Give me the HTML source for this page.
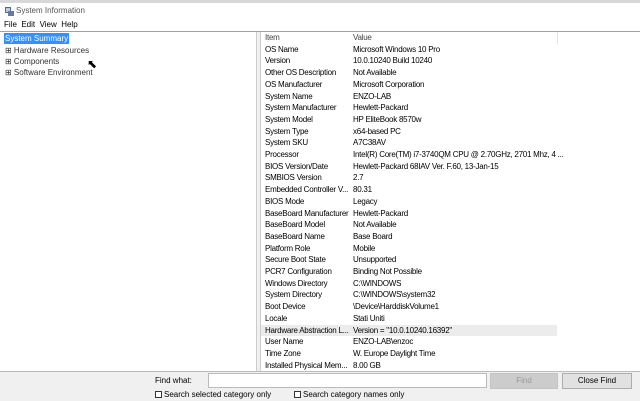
<!DOCTYPE html><html><head><style>
*{margin:0;padding:0;box-sizing:border-box}
body{width:640px;height:401px;background:#f0f0f0;font-family:"Liberation Sans",sans-serif;font-size:8px;color:#000;position:relative;overflow:hidden}
.a{position:absolute;white-space:nowrap}
.r{position:absolute;left:0;width:380px;height:11.7px;line-height:11.7px;letter-spacing:-0.25px}
.r span{position:absolute}
.r .k{left:4px}.r .v{left:92px}
</style></head><body>
<div class="a" style="left:0;top:0;width:640px;height:3px;background:#d8d8d8"></div>
<div class="a" style="left:0;top:3px;width:640px;height:28px;background:#fff"></div>
<svg class="a" style="left:5px;top:7px" width="9" height="9"><rect x="0" y="0" width="6" height="6" fill="#4a6aa8"/><rect x="1" y="1" width="4" height="4" fill="#bcd"/><rect x="3" y="4" width="6" height="5" fill="#6a7a9a"/></svg>
<div class="a" style="left:16px;top:6px;color:#555">System Information</div>
<div class="a" style="left:4px;top:20px">File&nbsp;&nbsp;Edit&nbsp;&nbsp;View&nbsp;&nbsp;Help</div>
<div class="a" style="left:0;top:31px;width:640px;height:1px;background:#a0a0a0"></div>
<div class="a" style="left:0;top:32px;width:257px;height:340px;background:#fff;border-right:1px solid #ccc"></div>
<div class="a" style="left:4px;top:33px;height:11px;line-height:11px;background:#3390ff;color:#fff;padding:0 1px">System Summary</div>
<div class="a" style="left:5px;top:45px;line-height:11px;color:#333">⊞ Hardware Resources</div>
<div class="a" style="left:5px;top:56px;line-height:11px;color:#333">⊞ Components</div>
<div class="a" style="left:5px;top:67px;line-height:11px;color:#333">⊞ Software Environment</div>
<div class="a" style="left:87px;top:57px;font-size:12px">⬉</div>
<div class="a" style="left:260px;top:32px;width:380px;height:340px;background:#fff;border-left:1px solid #ccc;overflow:hidden">
<div class="a" style="left:296px;top:0;width:1px;height:12px;background:#e5e5e5"></div>
<div class="r" style="top:0px;color:#444"><span class="k">Item</span><span class="v">Value</span></div>
<div class="r" style="top:11.7px"><span class="k">OS Name</span><span class="v">Microsoft Windows 10 Pro</span></div>
<div class="r" style="top:23.4px"><span class="k">Version</span><span class="v">10.0.10240 Build 10240</span></div>
<div class="r" style="top:35.1px"><span class="k">Other OS Description</span><span class="v">Not Available</span></div>
<div class="r" style="top:46.8px"><span class="k">OS Manufacturer</span><span class="v">Microsoft Corporation</span></div>
<div class="r" style="top:58.5px"><span class="k">System Name</span><span class="v">ENZO-LAB</span></div>
<div class="r" style="top:70.2px"><span class="k">System Manufacturer</span><span class="v">Hewlett-Packard</span></div>
<div class="r" style="top:81.9px"><span class="k">System Model</span><span class="v">HP EliteBook 8570w</span></div>
<div class="r" style="top:93.6px"><span class="k">System Type</span><span class="v">x64-based PC</span></div>
<div class="r" style="top:105.3px"><span class="k">System SKU</span><span class="v">A7C38AV</span></div>
<div class="r" style="top:117px"><span class="k">Processor</span><span class="v">Intel(R) Core(TM) i7-3740QM CPU @ 2.70GHz, 2701 Mhz, 4 ...</span></div>
<div class="r" style="top:128.7px"><span class="k">BIOS Version/Date</span><span class="v">Hewlett-Packard 68IAV Ver. F.60, 13-Jan-15</span></div>
<div class="r" style="top:140.4px"><span class="k">SMBIOS Version</span><span class="v">2.7</span></div>
<div class="r" style="top:152.1px"><span class="k">Embedded Controller V...</span><span class="v">80.31</span></div>
<div class="r" style="top:163.8px"><span class="k">BIOS Mode</span><span class="v">Legacy</span></div>
<div class="r" style="top:175.5px"><span class="k">BaseBoard Manufacturer</span><span class="v">Hewlett-Packard</span></div>
<div class="r" style="top:187.2px"><span class="k">BaseBoard Model</span><span class="v">Not Available</span></div>
<div class="r" style="top:198.9px"><span class="k">BaseBoard Name</span><span class="v">Base Board</span></div>
<div class="r" style="top:210.6px"><span class="k">Platform Role</span><span class="v">Mobile</span></div>
<div class="r" style="top:222.3px"><span class="k">Secure Boot State</span><span class="v">Unsupported</span></div>
<div class="r" style="top:234px"><span class="k">PCR7 Configuration</span><span class="v">Binding Not Possible</span></div>
<div class="r" style="top:245.7px"><span class="k">Windows Directory</span><span class="v">C:\WINDOWS</span></div>
<div class="r" style="top:257.4px"><span class="k">System Directory</span><span class="v">C:\WINDOWS\system32</span></div>
<div class="r" style="top:269.1px"><span class="k">Boot Device</span><span class="v">\Device\HarddiskVolume1</span></div>
<div class="r" style="top:280.8px"><span class="k">Locale</span><span class="v">Stati Uniti</span></div>
<div class="r" style="top:292.5px;width:296px;background:#ececec"><span class="k">Hardware Abstraction L...</span><span class="v">Version = "10.0.10240.16392"</span></div>
<div class="r" style="top:304.2px"><span class="k">User Name</span><span class="v">ENZO-LAB\enzoc</span></div>
<div class="r" style="top:315.9px"><span class="k">Time Zone</span><span class="v">W. Europe Daylight Time</span></div>
<div class="r" style="top:327.6px"><span class="k">Installed Physical Mem...</span><span class="v">8.00 GB</span></div>
</div>
<div class="a" style="left:0;top:371px;width:640px;height:1px;background:#bbb"></div>
<div class="a" style="left:155px;top:376px">Find what:</div>
<div class="a" style="left:208px;top:373px;width:279px;height:15px;background:#fff;border:1px solid #bbb"></div>
<div class="a" style="left:490px;top:373px;width:68px;height:16px;background:#ccc;border:1px solid #c4c4c4;color:#999;text-align:center;line-height:14px">Find</div>
<div class="a" style="left:562px;top:373px;width:70px;height:16px;background:#e1e1e1;border:1px solid #adadad;text-align:center;line-height:14px">Close Find</div>
<div class="a" style="left:155px;top:391px;width:7px;height:7px;border:1px solid #333;background:#fff"></div>
<div class="a" style="left:164px;top:390px">Search selected category only</div>
<div class="a" style="left:294px;top:391px;width:7px;height:7px;border:1px solid #333;background:#fff"></div>
<div class="a" style="left:303px;top:390px">Search category names only</div>
</body></html>
